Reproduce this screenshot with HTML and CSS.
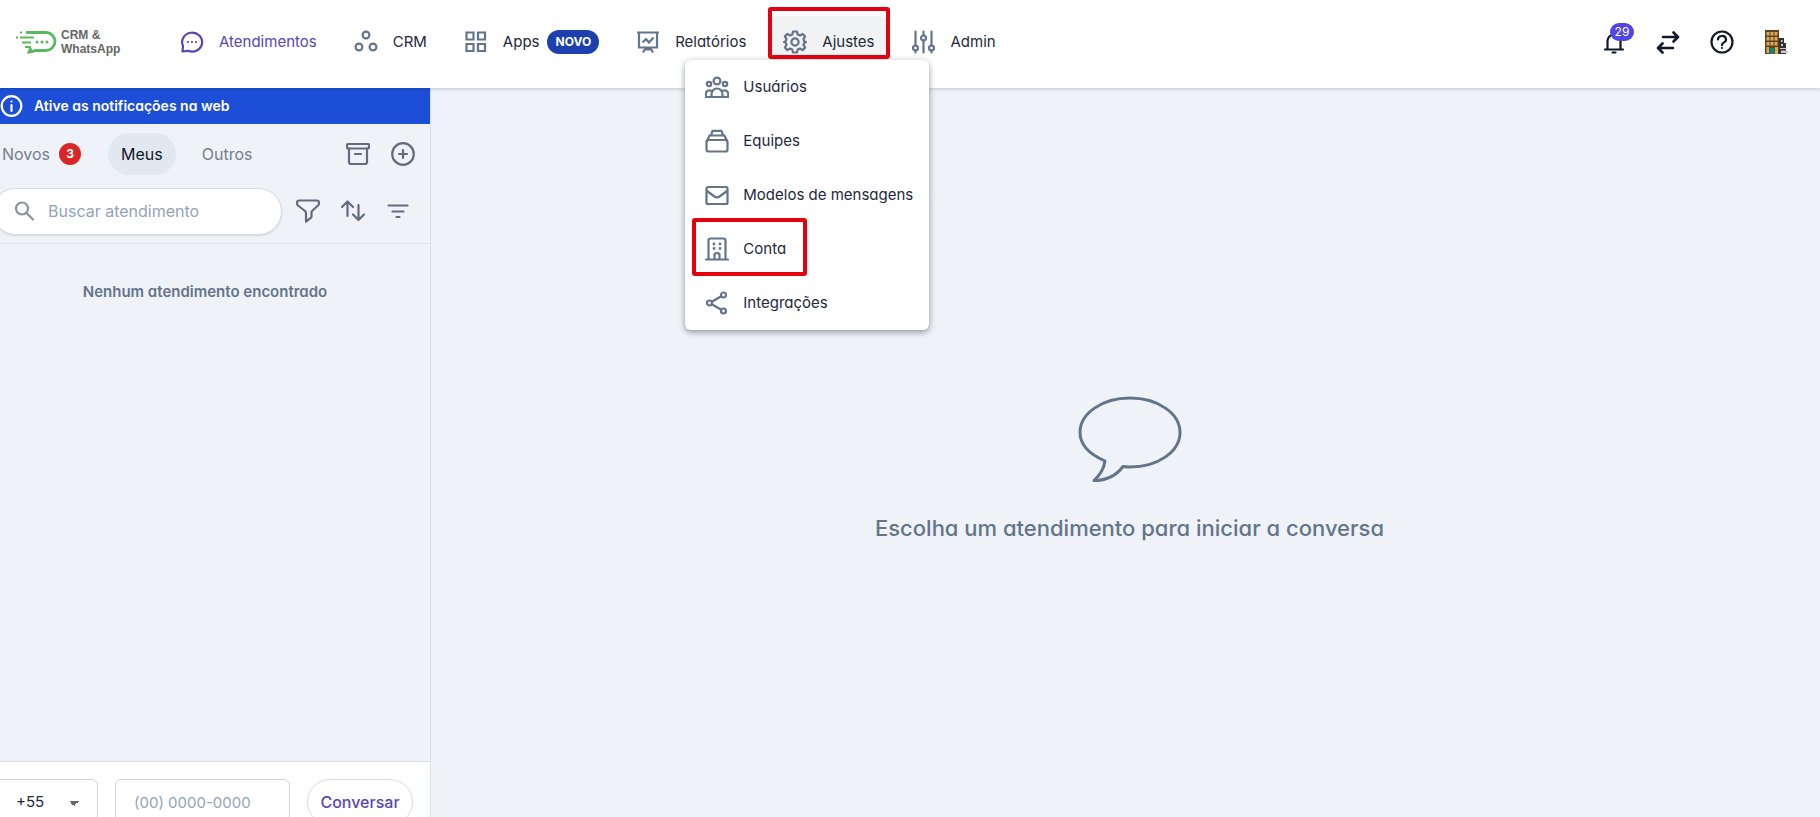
FILE: index.html
```html
<!DOCTYPE html>
<html lang="pt-BR">
<head>
<meta charset="utf-8">
<title>Atendimentos</title>
<link rel="stylesheet" href="styles.css">
</head>
<body>
<header class="topbar">
  <a class="logo" href="#">
    <svg class="logo-mark" viewBox="0 0 42 24" fill="none" stroke="#5cb860" stroke-width="2.8">
      <path d="M10 2.500H30a9 9 0 0 1 0 18H19c-2.500 1.500-4 1.500-6 1.500l2-4"/>
      <path d="M0 7.500h2M4 7.500h14M6 12.500h9M4 2.500h2M9 17h6" stroke-width="2.200"/>
      <g fill="#5cb860" stroke="none"><circle cx="21" cy="12" r="1.500"/><circle cx="26" cy="12" r="1.500"/><circle cx="31" cy="12" r="1.500"/></g>
    </svg>
    <span class="logo-text"><span>CRM &amp;</span><span>WhatsApp</span></span>
  </a>
  <nav class="nav">
    <a class="nav-item active" href="#">
      <svg class="icon" viewBox="0 0 24 24"><path d="M2.500 21.500 3 16A10 9.500 0 1 1 8 20.800z"/><path d="M8 12h.01M12 12h.01M16 12h.01" stroke-width="2.200"/></svg>
      Atendimentos</a>
    <a class="nav-item" href="#">
      <svg class="icon" viewBox="0 0 24 24"><circle cx="12" cy="5" r="3.400"/><circle cx="5" cy="17" r="3.400"/><circle cx="19" cy="17" r="3.400"/></svg>
      CRM</a>
    <a class="nav-item" href="#">
      <svg class="icon sharp" viewBox="0 0 24 24"><path d="M2.500 2.500h7v7h-7zM14 2.500h7v7h-7zM2.500 14h7v7h-7zM14 14h7v7h-7z"/></svg>
      Apps<span class="tag">NOVO</span></a>
    <a class="nav-item" href="#">
      <svg class="icon sharp" viewBox="0 0 24 24"><path d="M1 2.500h22M3 2.500v15h18v-15M10 17.500 7 22.500M14 17.500l3 5M9.500 19.500h5M6.500 12.500 10 9l3 3.500 4.500-5"/></svg>
      Relatórios</a>
    <div class="nav-group">
      <button class="nav-item open" type="button" aria-expanded="true">
        <svg class="icon" viewBox="0 0 24 24"><path d="M10 1.500h4l.7 3 2.300 1 2.700-1.600 2.400 2.600-1.600 2.600.9 2.400 1.600.5-1.600.6-.9 2.300 1.600 2.700-2.500 2.500-2.600-1.600-2.300 1-.7 3h-4l-.7-3-2.300-1-2.700 1.600-2.400-2.600 1.600-2.600-.9-2.400-1.600-.5 1.600-.6.9-2.300L1.900 6.400l2.500-2.500L7 5.500l2.300-1z"/><circle cx="12" cy="12" r="3.600"/></svg>
        Ajustes</button>
      <div class="menu">
        <a class="menu-item" href="#"><svg class="icon" viewBox="0 0 24 24"><circle cx="12" cy="6" r="3.400"/><circle cx="4" cy="9" r="2.200"/><circle cx="20" cy="9" r="2.200"/><path d="M6.500 22v-3a5.500 5.500 0 0 1 11 0v3zM6.500 22H.8v-3A3.600 3.600 0 0 1 6.500 16M17.500 22h5.700v-3a3.600 3.600 0 0 0-5.700-3"/></svg>Usuários</a>
        <a class="menu-item" href="#"><svg class="icon" viewBox="0 0 24 24"><rect x="1.500" y="11" width="21" height="11.500" rx="2"/><path d="M2 12 4.500 6.500h15L22 12M6 6.500l1.500-4.700h9L18 6.500"/></svg>Equipes</a>
        <a class="menu-item" href="#"><svg class="icon" viewBox="0 0 24 24"><rect x="1.500" y="4" width="21" height="17" rx="1.500"/><path d="m2 8 7.500 5.500q2.500 1.600 5 0L22 8"/></svg>Modelos de mensagens</a>
        <a class="menu-item" href="#"><svg class="icon" viewBox="0 0 24 24"><path d="M1 22.500h22M3.500 22.500v-19q0-2 2-2h13q2 0 2 2v19M9.500 22.500v-5q0-1.500 2.500-1.500t2.500 1.500v5"/><path d="M9 7h.01M15 7h.01M9 11.500h.01M15 11.500h.01" stroke-width="2.800"/></svg>Conta</a>
        <a class="menu-item" href="#"><svg class="icon" viewBox="0 0 24 24"><circle cx="4.500" cy="12" r="2.500"/><circle cx="18.500" cy="4" r="2.500"/><circle cx="18.500" cy="20" r="2.500"/><path d="m6.800 10.800 9.500-5.600M6.800 13.200l9.500 5.600"/></svg>Integrações</a>
        <span class="mark mark-account"></span>
      </div>
      <span class="mark mark-settings"></span>
    </div>
    <a class="nav-item" href="#">
      <svg class="icon" viewBox="0 0 24 24"><path d="M3.500 1.500v14M3.500 20.500v2M11.500 1.500v4M11.500 10.500v12M19.500 1.500v14M19.500 20.500v2"/><circle cx="3.500" cy="18" r="2.500"/><circle cx="11.500" cy="8" r="2.500"/><circle cx="19.500" cy="18" r="2.500"/></svg>
      Admin</a>
  </nav>
  <div class="actions">
    <button class="action" type="button" aria-label="Notificações"><svg class="icon" viewBox="0 0 24 24"><path d="M3 19.500h18M5.500 19V11a6.500 6.500 0 0 1 13 0v8M12 3v1.500M10.500 22.500h3"/></svg><span class="count">29</span></button>
    <button class="action" type="button" aria-label="Alternar"><svg class="icon bold" viewBox="0 0 24 24"><path d="M7 7h14M17.500 2.500 22 7l-4.500 4.500M17 18H3M6.500 13.500 2 18l4.500 4.500"/></svg></button>
    <button class="action" type="button" aria-label="Ajuda"><svg class="icon" viewBox="0 0 24 24"><circle cx="12" cy="12" r="10.500"/><path d="M8 9.500a4 3.500 0 1 1 5.700 3.100q-1.700 1-1.700 2.600M12 18h.01"/></svg></button>
    <button class="action" type="button" aria-label="Empresa"><svg class="building" viewBox="0 0 24 24">
      <path fill="#5c4421" d="M1 0h14v24H1z"/><path fill="#dba95a" d="M2.500 2h11v3.500h-11zM2.500 7h11v3.500h-11zM2.500 12h11v3.500h-11zM2.500 17H5v6H2.500z"/><path stroke="#5c4421" stroke-width="1" d="M6 1v15M10 1v15"/><path fill="#1c8068" d="M5.500 18h5v6h-5z"/><path fill="#dba95a" d="M11 17h3v7h-3z"/>
      <path fill="#333" d="M15 8h5v5h2v11h-7z"/><path fill="#ccc" d="M17 10h1.500v2H17zM17 14h2v2h-2zM16 18h7v1h-7zM17 20.500h7v2.500h-7z"/></svg></button>
  </div>
</header>
<div class="layout">
  <aside class="sidebar">
    <a class="notice" href="#"><svg class="icon" viewBox="0 0 24 24"><circle cx="11.500" cy="12" r="9.800"/><path d="M11.500 11v6M11.500 7.500h.01"/></svg>Ative as notificações na web</a>
    <div class="tabs">
      <button class="tab tab-new" type="button">Novos<span class="new-count">3</span></button>
      <button class="tab selected" type="button">Meus</button>
      <button class="tab" type="button">Outros</button>
      <div class="tools">
        <button class="tool" type="button" aria-label="Arquivados"><svg class="icon" viewBox="0 0 24 24"><rect x="1" y="2" width="22" height="4.500" rx="1"/><path d="M3 6.500V20q0 2 2 2h14q2 0 2-2V6.500M9 12h6"/></svg></button>
        <button class="tool" type="button" aria-label="Novo atendimento"><svg class="icon" viewBox="0 0 24 24"><circle cx="12" cy="12" r="10.800"/><path d="M12 8v8M8 12h8"/></svg></button>
      </div>
    </div>
    <div class="search-row">
      <label class="search"><svg class="icon" viewBox="0 0 24 24"><circle cx="9" cy="9.500" r="6"/><path d="m13.500 14 6.500 6.500"/></svg><input type="text" placeholder="Buscar atendimento" aria-label="Buscar atendimento"></label>
      <div class="tools">
        <button class="tool" type="button" aria-label="Filtrar"><svg class="icon" viewBox="0 0 24 24"><path d="M3 1.500h18q2 0 2 2v1q0 1-1 2l-5.500 5q-1 1-1 2v4q0 1-1 1.600L10 22.500V14q0-1-1-2L2 6.500q-1-1-1-2v-1q0-2 2-2z"/></svg></button>
        <button class="tool" type="button" aria-label="Ordenar"><svg class="icon" viewBox="0 0 24 24"><path d="M6.500 17V2.500M1 8l5.500-5.500L12 8M17.500 6v15M12 15.500l5.500 5.500 5.500-5.500"/></svg></button>
        <button class="tool" type="button" aria-label="Organizar"><svg class="icon" viewBox="0 0 24 24"><path d="M2.500 6.500h19M6.500 12.500h11M10.500 18h3"/></svg></button>
      </div>
    </div>
    <p class="empty">Nenhum atendimento encontrado</p>
    <form class="dial">
      <select class="code" aria-label="Código do país"><option>+55</option></select>
      <input class="phone" type="text" placeholder="(00) 0000-0000" aria-label="Telefone">
      <button class="start" type="button">Conversar</button>
    </form>
  </aside>
  <main class="main">
    <svg class="bubble" viewBox="0 0 104 88"><path d="M27 65C11 58 2 48 2 36.500 2 17.500 24 2 52 2s50 15.500 50 34.500S80 71 52 71q-4 0-7-.5C38 80 29 84.500 16 84.500 22 79 26 72 27 65z"/></svg>
    <h1 class="headline">Escolha um atendimento para iniciar a conversa</h1>
  </main>
</div>
</body>
</html>
```
FILE: styles.css
```css
* { box-sizing: border-box; }
body {
  margin: 0;
  height: 100vh;
  display: flex;
  flex-direction: column;
  overflow: hidden;
  background: #eff3f8;
  color: #1e293b;
  font: 15px/24px Inter, "Liberation Sans", sans-serif;
  font-feature-settings: "cv11";
}
button, input, select { font: inherit; font-feature-settings: normal; color: inherit; }
button { background: none; border: 0; padding: 0; cursor: pointer; }
a { color: inherit; text-decoration: none; }
.icon {
  width: 24px;
  height: 24px;
  flex: none;
  fill: none;
  stroke: #64748b;
  stroke-width: 2.2;
  stroke-linecap: round;
  stroke-linejoin: round;
}
.icon.sharp { stroke-linecap: butt; stroke-linejoin: miter; }
.icon.bold { stroke-width: 2.6; }

.topbar {
  flex: none;
  height: 88px;
  display: flex;
  align-items: center;
  padding: 0 32px 4px 16px;
  background: #fff;
  box-shadow: 0 1px 4px rgba(15, 23, 42, .2);
  position: relative;
  z-index: 2;
}
.logo { display: flex; align-items: center; gap: 3px; width: 152px; }
.logo-mark { width: 42px; height: 24px; }
.logo-text { display: flex; flex-direction: column; font: 700 12px/14px "Liberation Sans", sans-serif; color: #666; }
.nav { display: flex; align-items: center; gap: 13px; }
.nav-item {
  display: flex;
  align-items: center;
  gap: 15px;
  height: 52px;
  padding: 0 12px;
  border-radius: 6px;
  font-feature-settings: "cv11";
}
.nav-item.active { color: #5b45b5; }
.nav-item.active .icon { stroke: #5b45b5; }
.nav-item.open { background: #f1f2f4; }
.tag {
  margin-left: -7px;
  padding: 0 8px;
  border-radius: 12px;
  background: #1e40af;
  color: #fff;
  font-size: 12px;
  font-weight: 700;
}
.nav-group { position: relative; }
.menu {
  position: absolute;
  top: 44px;
  left: -86px;
  z-index: 3;
  width: 244px;
  background: #fff;
  border-radius: 6px;
  box-shadow: 0 2px 6px rgba(15, 23, 42, .45);
}
.menu-item { display: flex; align-items: center; gap: 14px; height: 54px; padding: 0 20px; white-space: nowrap; }
.mark { position: absolute; border: 4px solid #e3000f; border-radius: 3px; pointer-events: none; z-index: 4; }
.mark-settings { top: -9px; left: -3px; width: 122px; height: 52px; }
.mark-account { top: 158px; left: 7px; width: 115px; height: 58px; }

.actions { display: flex; gap: 30px; margin-left: auto; }
.action { position: relative; width: 24px; height: 24px; }
.action .icon { stroke: #111827; }
.building { width: 24px; height: 24px; }
.count {
  position: absolute;
  top: -7px;
  left: 8px;
  width: 24px;
  border-radius: 9px;
  background: #4f46e5;
  color: #fff;
  font-size: 12px;
  line-height: 18px;
}

.layout { flex: 1; min-height: 0; display: grid; grid-template-columns: 431px 1fr; }
.sidebar { display: flex; flex-direction: column; min-height: 0; border-right: 1px solid #d9dfe8; }
.notice {
  display: flex;
  align-items: center;
  gap: 10px;
  height: 36px;
  background: #1d4ed8;
  color: #fff;
  font-size: 14px;
  font-weight: 600;
}
.notice .icon { stroke: #fff; }
.tabs { display: flex; align-items: center; height: 60px; padding: 0 15px 0 2px; font-size: 16px; }
.tab { height: 42px; padding: 0 13px; border-radius: 21px; color: #737d8e; display: flex; align-items: center; }
.tab-new { padding: 0; gap: 9px; margin-right: 27px; }
.tab.selected { background: #e2e8f0; color: #0f172a; margin-right: 13px; }
.new-count {
  width: 22px;
  border-radius: 11px;
  background: #dc2626;
  color: #fff;
  font-size: 12px;
  font-weight: 700;
  line-height: 22px;
}
.tools { display: flex; gap: 21px; margin-left: auto; }
.tool { width: 24px; height: 24px; }
.tool .icon { stroke: #646b7d; }
.search-row { display: flex; align-items: center; height: 60px; padding: 0 20px 5px 0; border-bottom: 1px solid #dfe4ec; }
.search {
  display: flex;
  align-items: center;
  gap: 11px;
  width: 290px;
  height: 47px;
  margin-left: -8px;
  padding: 0 20px;
  border: 1px solid #d5dbe5;
  border-radius: 24px;
  background: #fff;
  box-shadow: 0 1px 2px rgba(15, 23, 42, .12);
  font-size: 16px;
}
.search .icon { stroke: #8a919e; }
.search input { width: 100%; min-width: 0; border: 0; padding: 0; outline: 0; background: none; }
::placeholder { color: #94a3b8; opacity: 1; }
.empty { flex: 1; margin: 0; padding: 36px 20px 0 0; text-align: center; color: #64748b; font-weight: 600; }
.dial {
  flex: 0 0 56px;
  display: flex;
  gap: 17px;
  padding: 17px 17px 0 0;
  background: #fff;
  border-top: 1px solid #d9dfe8;
  overflow: hidden;
}
.code, .phone { height: 46px; border: 1px solid #d1d5db; border-radius: 6px; background: #fff; }
.code {
  width: 106px;
  margin-left: -8px;
  padding: 0 23px;
  appearance: none;
  background: linear-gradient(to bottom right, #666 50%, transparent 50%) 81px 21px / 5px 5px no-repeat,
    linear-gradient(to bottom left, #666 50%, transparent 50%) 76px 21px / 5px 5px no-repeat, #fff;
}
.phone { flex: 1; min-width: 0; padding: 0 18px; }
.start { width: 106px; height: 46px; border: 1px solid #d9d9e3; border-radius: 24px; color: #5b45b5; font-size: 16px; font-weight: 500; }

.main { display: flex; flex-direction: column; align-items: center; justify-content: center; gap: 28px; padding: 34px 0 0 8px; }
.bubble { width: 104px; height: 88px; fill: none; stroke: #64748b; stroke-width: 3; stroke-linejoin: round; }
.headline { margin: 0; font-size: 22px; line-height: 32px; font-weight: 500; color: #64748b; }
```
